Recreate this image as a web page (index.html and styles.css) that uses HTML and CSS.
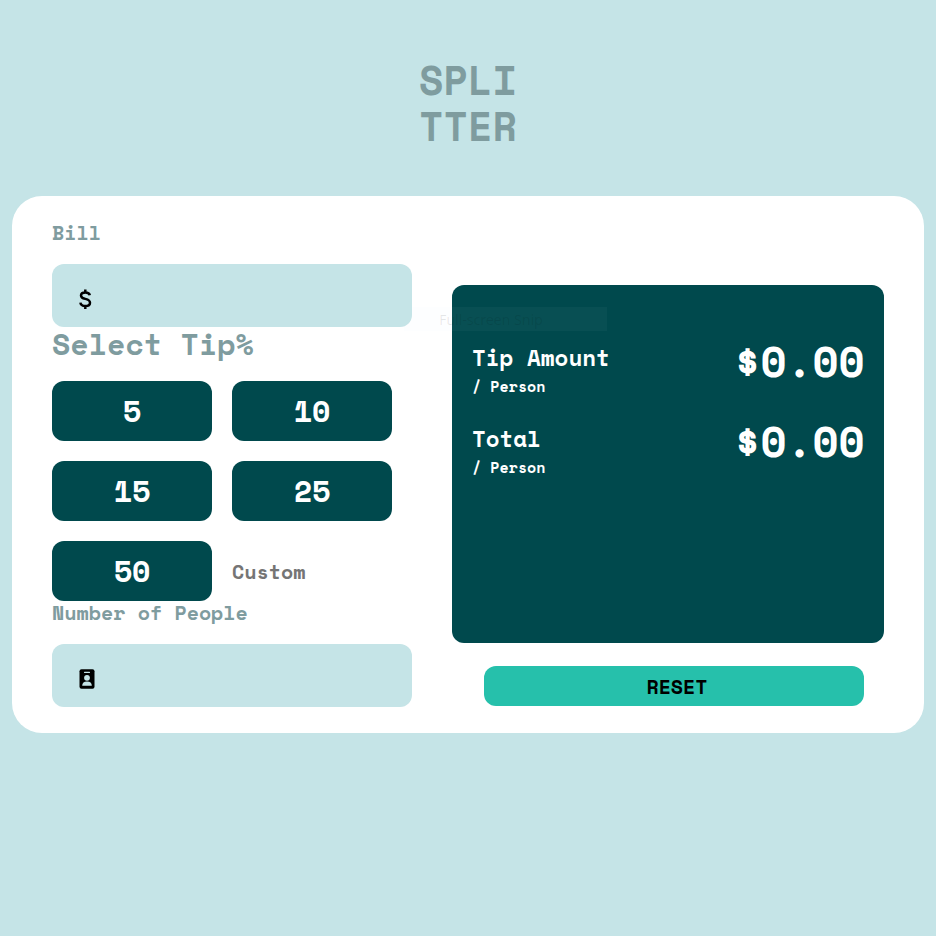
FILE: index.html
```html
<!DOCTYPE html>
<html lang="en">
<head>
<meta charset="utf-8">
<title>Splitter</title>
<link rel="stylesheet" href="styles.css">
</head>
<body>
<h1 class="title">SPLI<br>TTER</h1>
<main class="card">
  <form class="inputs">
    <label class="label">Bill</label>
    <div class="field">
      <svg class="dollar" viewBox="0 0 24 24" width="24" height="24"><path d="M16.8 8.2C16.4 6.4 14.8 5.4 12.3 5.4 9.7 5.4 8 6.5 8 8.5c0 2 1.6 2.8 4.3 3.4 3 .7 4.7 1.6 4.7 3.9 0 2.100-1.800 3.300-4.600 3.300-2.800 0-4.700-1.200-5-3.400M12.300 2.500v3M12.300 19v3"/></svg>
    </div>
    <h2 class="tip-title">Select Tip%</h2>
    <div class="tips">
      <button type="button" class="tip">5</button>
      <button type="button" class="tip">10</button>
      <button type="button" class="tip">15</button>
      <button type="button" class="tip">25</button>
      <button type="button" class="tip">50</button>
      <span class="custom">Custom</span>
    </div>
    <label class="label people">Number of People</label>
    <div class="field">
      <svg class="badge" viewBox="0 0 16 20" width="16" height="20"><rect x=".5" y=".2" width="15" height="19.600" rx="2"/><g class="cut"><rect x="5" y="2.700" width="6" height="1.200" rx=".5"/><circle cx="8" cy="8.800" r="2.900"/><path d="M3.200 16.700c0-2.700 1.700-4.200 4.800-4.200s4.800 1.500 4.800 4.200z"/></g></svg>
    </div>
  </form>
  <section class="results">
    <div class="panel">
      <div class="row">
        <div><div class="name">Tip Amount</div><div class="per">/ Person</div></div>
        <div class="amount">$0.00</div>
      </div>
      <div class="row">
        <div><div class="name">Total</div><div class="per">/ Person</div></div>
        <div class="amount">$0.00</div>
      </div>
      <div class="snip">Full-screen Snip</div>
    </div>
    <button type="button" class="reset">RESET</button>
  </section>
</main>
</body>
</html>
```
FILE: styles.css
```css
* { box-sizing: border-box; margin: 0; padding: 0; }
body {
  background: #c5e4e7;
  font-family: "Space Mono", "DejaVu Sans Mono", monospace;
  font-weight: 700;
  padding: 57px 12px 0;
}
button { font: inherit; border: 0; }
.title { color: #7f9c9f; font-size: 40px; line-height: 46px; height: 139px; text-align: center; }
.card {
  display: flex;
  gap: 40px;
  height: 537px;
  padding: 24px 40px 0;
  border-radius: 30px;
  background: #fff;
}
.inputs { width: 360px; }
.label { display: block; height: 44px; padding-top: 1px; color: #7f9c9f; font-size: 20px; line-height: 24px; }
.field { height: 63px; padding: 24px 0 0 27px; border-radius: 12px; background: #c5e4e7; }
.field svg { display: block; }
.dollar { margin: -1px 0 0 -6px; fill: none; stroke: #000; stroke-width: 2.500; }
.badge { margin-top: 1px; }
.cut { fill: #c5e4e7; }
.tip-title { height: 54px; color: #7f9c9f; font-size: 30px; line-height: 34px; }
.tips { display: grid; grid-template-columns: 160px 160px; grid-auto-rows: 60px; gap: 20px; }
.tip { padding-bottom: 2px; border-radius: 12px; background: #00494d; color: #fff; font-size: 30px; }
.custom { color: #757575; font-size: 20px; line-height: 62px; }
.people { height: 43px; padding-top: 0; }
.results { width: 432px; padding-top: 65px; }
.panel { position: relative; height: 358px; padding: 57px 20px 0; border-radius: 12px; background: #00494d; color: #fff; }
.row { display: flex; justify-content: space-between; height: 81px; }
.name { font-size: 22.500px; line-height: 32px; }
.per { font-size: 15px; line-height: 25px; }
.amount { margin-right: -.5px; font-size: 42.500px; line-height: 38px; }
.row + .row .amount { margin-top: -1px; }
.snip {
  position: absolute;
  left: -48px;
  top: 22px;
  width: 203px;
  height: 24px;
  padding-left: 35px;
  background: rgba(210, 225, 255, .04);
  color: rgba(0, 0, 0, .09);
  font: 400 14.500px/25px "Noto Sans", "Open Sans", sans-serif;
  letter-spacing: -.2px;
}
.reset { display: block; width: 380px; height: 40px; margin: 23px 0 0 32px; padding-left: 6px; border-radius: 12px; background: #26c0ab; color: #000; font-size: 20px; }
```
